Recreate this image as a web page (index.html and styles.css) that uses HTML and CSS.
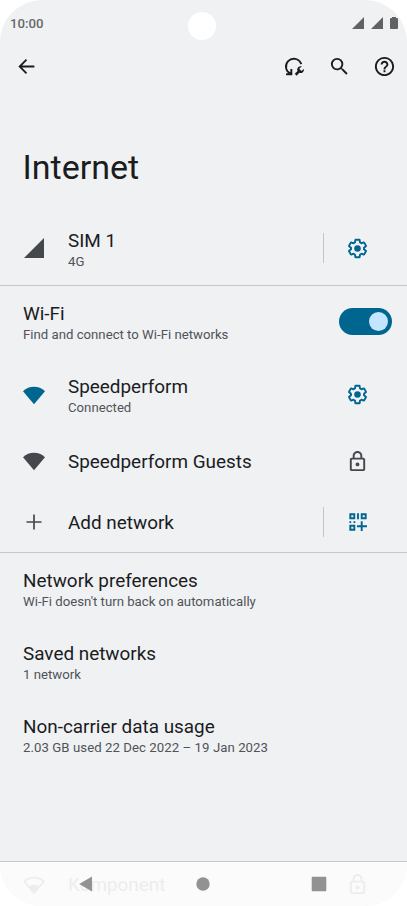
FILE: index.html
```html
<!DOCTYPE html>
<html lang="en">
<head>
<meta charset="utf-8">
<title>Internet</title>
<link rel="stylesheet" href="styles.css">
</head>
<body>
<svg class="defs" width="0" height="0">
  <symbol id="gear" viewBox="0 0 24 24"><path transform="translate(1.080 1.080) scale(.91)" fill="none" stroke="currentColor" stroke-width="2.200" stroke-linejoin="round" d="M19.430 12.980c.04-.32.07-.64.07-.98 0-.34-.03-.66-.07-.98l2.110-1.650c.19-.15.24-.42.12-.64l-2-3.460c-.09-.16-.26-.25-.44-.25-.06 0-.12.01-.17.03l-2.490 1c-.52-.4-1.080-.73-1.690-.98l-.38-2.650C14.460 2.180 14.250 2 14 2h-4c-.25 0-.46.18-.49.42l-.38 2.650c-.61.25-1.170.59-1.690.98l-2.490-1c-.06-.02-.12-.03-.18-.03-.17 0-.34.09-.43.25l-2 3.460c-.13.22-.07.49.12.64l2.110 1.650c-.04.32-.07.65-.07.98 0 .33.03.66.07.98l-2.110 1.650c-.19.15-.24.42-.12.64l2 3.460c.09.16.26.25.44.25.06 0 .12-.01.17-.03l2.490-1c.52.4 1.080.73 1.690.98l.38 2.650c.03.24.24.42.49.42h4c.25 0 .46-.18.49-.42l.38-2.650c.61-.25 1.170-.59 1.690-.98l2.490 1c.06.02.12.03.18.03.17 0 .34-.09.43-.25l2-3.460c.12-.22.07-.49-.12-.64z"/><circle cx="12" cy="12" r="3.400" fill="currentColor"/></symbol>
  <symbol id="lock" viewBox="0 0 24 24"><path fill="currentColor" d="M18 8h-1V6c0-2.760-2.240-5-5-5S7 3.240 7 6v2H6c-1.100 0-2 .9-2 2v10c0 1.100.9 2 2 2h12c1.100 0 2-.9 2-2V10c0-1.100-.9-2-2-2zM9 6c0-1.660 1.340-3 3-3s3 1.340 3 3v2H9V6zm9 14H6V10h12v10zm-6-3c1.100 0 2-.9 2-2s-.9-2-2-2-2 .9-2 2 .9 2 2 2z"/></symbol>
  <symbol id="wifi" viewBox="0 0 24 20"><path fill="currentColor" d="M0 6C3.500 2.500 7.500 1 12 1s8.500 1.500 12 5L12 20z"/></symbol>
</svg>
<main class="phone">
  <header class="status">
    <span class="clock">10:00</span>
    <span class="camera"></span>
    <svg class="status-icons" viewBox="0 0 48 14"><path fill="#616265" d="M0 13 12 1v12zM19 13 31 1v12zM38 3q0-1 1-1h1V1h4v1h1q1 0 1 1v9q0 1-1 1h-6q-1 0-1-1z"/></svg>
  </header>
  <nav class="toolbar">
    <svg class="back" viewBox="0 0 24 24"><path fill="none" stroke="currentColor" stroke-width="2.100" d="M21 12H4M12 4.200 4.200 12l7.800 7.800"/></svg>
    <svg class="tool reset" viewBox="0 0 24 24"><path fill="none" stroke="currentColor" stroke-width="2.300" d="M8 21C1.500 18.500.8 10.500 5 6.200 9.500 1.500 18 2.500 20.800 9.800M2.500 21.800h6.300v-6.300"/><path fill="none" stroke="currentColor" stroke-width="3" d="m14 22.500 4-4"/><path fill="currentColor" d="M21.500 12.300c-3.800-.8-6.300 2-5.500 5.200.8 3 4.300 4 6.600 2 1-1 1.600-2.400 1.200-4L21 18l-2.700-2.600z"/></svg>
    <svg class="tool search" viewBox="0 0 24 24"><path fill="currentColor" d="M15.500 14h-.79l-.28-.27A6.470 6.470 0 0 0 16 9.500 6.500 6.500 0 1 0 9.500 16c1.610 0 3.090-.59 4.230-1.570l.27.28v.79l5 4.990L20.490 19zm-6 0a4.500 4.500 0 1 1 0-9 4.500 4.500 0 0 1 0 9z"/></svg>
    <svg class="tool help" viewBox="0 0 24 24"><path fill="currentColor" d="M11 18h2v-2h-2v2zm1-16C6.480 2 2 6.480 2 12s4.480 10 10 10 10-4.480 10-10S17.520 2 12 2zm0 18c-4.410 0-8-3.590-8-8s3.590-8 8-8 8 3.590 8 8-3.590 8-8 8zm0-14c-2.210 0-4 1.790-4 4h2c0-1.100.9-2 2-2s2 .9 2 2c0 2-3 1.750-3 5h2c0-2.250 3-2.500 3-5 0-2.210-1.790-4-4-4z"/></svg>
  </nav>
  <h1>Internet</h1>
  <section>
    <div class="row sim">
      <span class="lead"><svg class="signal" viewBox="0 0 20 20"><path fill="currentColor" d="M0 20 20 0v20z"/></svg></span>
      <div class="text"><p class="title">SIM 1</p><p class="sub">4G</p></div>
      <span class="action split"><svg class="icon"><use href="#gear"/></svg></span>
    </div>
  </section>
  <section>
    <div class="row switch-row">
      <div class="text"><p class="title">Wi-Fi</p><p class="sub">Find and connect to Wi-Fi networks</p></div>
      <span class="switch"><span class="thumb"></span></span>
    </div>
    <div class="row">
      <span class="lead blue"><svg class="wifi"><use href="#wifi"/></svg></span>
      <div class="text"><p class="title">Speedperform</p><p class="sub">Connected</p></div>
      <span class="action"><svg class="icon"><use href="#gear"/></svg></span>
    </div>
    <div class="row single">
      <span class="lead"><svg class="wifi"><use href="#wifi"/></svg></span>
      <div class="text"><p class="title">Speedperform Guests</p></div>
      <span class="action gray"><svg class="icon"><use href="#lock"/></svg></span>
    </div>
    <div class="row single add">
      <span class="lead"><svg class="plus" viewBox="0 0 16 16"><path stroke="currentColor" stroke-width="1.700" d="M8 .5v15M.5 8h15"/></svg></span>
      <div class="text"><p class="title">Add network</p></div>
      <span class="action split"><svg class="qr" viewBox="0 0 18 18"><path fill="none" stroke="currentColor" stroke-width="1.900" d="M1.300 1.300h4v4h-4zM12.700 1.300h4v4h-4zM1.300 12.700h4v4h-4zM9 .3v6M12.700 8.200v9.800M8 13.200h10"/><path fill="currentColor" d="M.4 8.200h1.800V10H.4zM4.500 8.200h1.800V10H4.500z"/></svg></span>
    </div>
  </section>
  <section class="last">
    <div class="row"><div class="text"><p class="title">Network preferences</p><p class="sub">Wi-Fi doesn't turn back on automatically</p></div></div>
    <div class="row"><div class="text"><p class="title">Saved networks</p><p class="sub">1 network</p></div></div>
    <div class="row"><div class="text"><p class="title">Non-carrier data usage</p><p class="sub dates">2.03 GB used 22 Dec 2022 – 19 Jan 2023</p></div></div>
  </section>
  <footer class="bottom">
    <div class="row ghost">
      <span class="lead"><svg class="wifi" viewBox="0 0 24 20"><path fill="none" stroke="currentColor" stroke-width="1.800" d="M1.300 6C4.500 3 8 1.900 12 1.900S19.500 3 22.700 6L12 18.600z"/><path fill="currentColor" d="M6.500 12q5.500-5 11 0L12 19z"/></svg></span>
      <div class="text"><p class="title">Komponent</p></div>
      <span class="action"><svg class="icon"><use href="#lock"/></svg></span>
    </div>
    <div class="keys">
      <svg viewBox="0 0 16 16"><path d="M1.200 8 14 .5v15z"/></svg>
      <svg viewBox="0 0 16 16"><circle cx="8" cy="8" r="6.700"/></svg>
      <svg viewBox="0 0 16 16"><rect x=".7" y=".7" width="14.600" height="14.600" rx="1"/></svg>
    </div>
  </footer>
</main>
</body>
</html>
```
FILE: styles.css
```css
* { box-sizing: border-box; }
body { margin: 0; background: #fff; font-family: Roboto, sans-serif; color: #1b1c1e; }
p, h1 { margin: 0; font-weight: 400; }
svg { display: block; flex: none; }
.defs { position: absolute; }
.phone { width: 407px; height: 906px; display: flex; flex-direction: column; background: #eff1f3; border-radius: 42px; overflow: hidden; }
.status { height: 46px; flex: none; display: grid; grid-template-columns: 1fr 28px 1fr; align-items: center; padding: 0 9px 0 7px; }
.clock { font-size: 13.2px; font-weight: 500; color: #67686b; padding-left: 3px; }
.camera { width: 28px; height: 28px; border-radius: 50%; background: #fff; margin: 5px 0 0 -.5px; }
.status-icons { width: 48px; height: 14px; justify-self: end; margin-right: -2px; }
.toolbar { height: 40px; flex: none; display: flex; align-items: center; padding: 0 11px 0 16px; }
.back { width: 21px; height: 21px; margin-right: auto; }
.tool { width: 23px; height: 23px; margin-left: 22px; }
.reset { width: 20px; height: 20px; margin-right: 2px; }
h1 { height: 125px; flex: none; padding: 60px 0 0 22.500px; font-size: 34px; line-height: 42px; }
section { border-bottom: 1px solid #c5c7ca; flex: none; }
.row { height: 73px; display: flex; align-items: center; padding-left: 23px; }
.sim { height: 74px; }
.single { height: 60px; }
.add { height: 61px; }
.switch-row { height: 72px; padding-right: 15px; }
.lead { width: 45px; color: #44474c; }
.blue { color: #00658f; }
.text { flex: 1; white-space: nowrap; padding-top: 2px; }
.sim .text { padding-top: 4px; }
.last .text, .ghost .text { padding-top: 0; }
.title { font-size: 18.9px; line-height: 24px; }
.sub { font-size: 13.2px; line-height: 18px; color: #515358; }
.dates { letter-spacing: .06px; }
.signal { width: 20px; height: 20px; margin-left: 1px; }
.wifi { width: 22px; height: 20px; }
.plus { width: 16px; height: 16px; margin-left: 3px; }
.action { width: 84px; height: 30px; display: flex; align-items: center; justify-content: center; color: #00658f; padding-right: 16px; border-left: 1px solid transparent; }
.split { border-left-color: #c3c5c8; }
.gray { color: #44474c; }
.icon { width: 23px; height: 23px; }
.qr { width: 18px; height: 18px; }
.switch { width: 53px; height: 27px; border-radius: 14px; background: #00658f; display: flex; align-items: center; justify-content: flex-end; padding-right: 4px; margin-top: -1px; }
.thumb { width: 19px; height: 19px; border-radius: 50%; background: #c4e5ff; }
.last { flex: 1; }
.bottom { height: 44px; flex: none; display: grid; background: #fbfbfb; }
.bottom > * { grid-area: 1 / 1; }
.ghost, .ghost * { color: #ededed; }
.ghost { height: 45px; }
.keys { height: 44px; display: flex; justify-content: space-between; align-items: center; padding: 0 80px 0 78px; z-index: 1; }
.keys svg { width: 16px; height: 16px; fill: #929292; }
```
